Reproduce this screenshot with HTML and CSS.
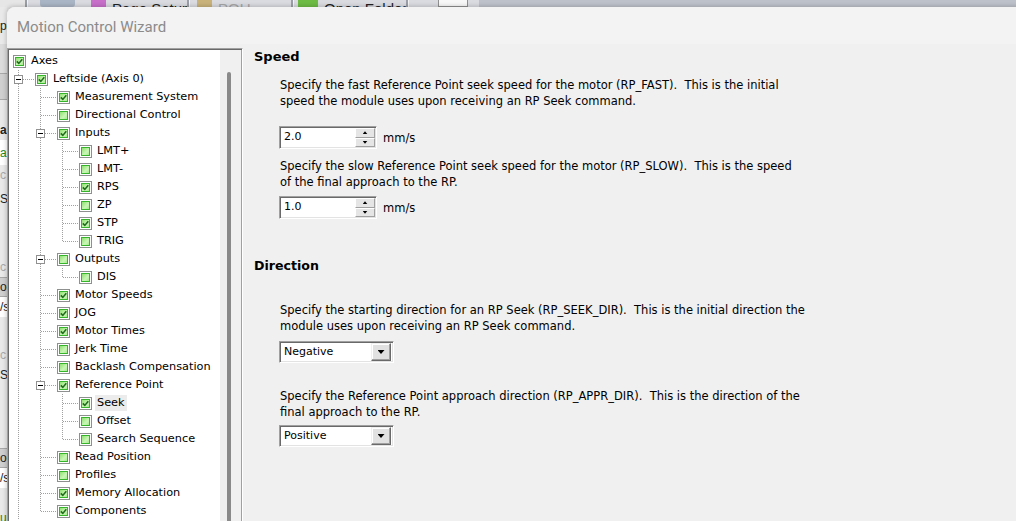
FILE: index.html
```html
<!DOCTYPE html>
<html>
<head>
<meta charset="utf-8">
<title>Motion Control Wizard</title>
<link rel="stylesheet" href="styles.css">
</head>
<body>
<div class="desktop">
  <div class="app-toolbar">
    <div class="tb-seg tb-lead"></div>
    <div class="tb-sep"></div>
    <div class="tb-seg tb-b1"><span class="ic ic-gray"></span></div>
    <div class="tb-seg tb-b2"><span class="ic ic-pink"></span><span class="tb-text">Page Setup</span></div>
    <div class="tb-sep"></div>
    <div class="tb-seg tb-b3"><span class="ic ic-yel"></span><span class="tb-text dis">POU</span></div>
    <div class="tb-sep"></div>
    <div class="tb-seg tb-b4"><span class="ic ic-grn"></span><span class="tb-text">Open Folder</span></div>
    <div class="tb-sep"></div>
    <div class="tb-seg tb-b5"><span class="ic ic-white"></span></div>
    <div class="tb-seg tb-rest"></div>
  </div>
  <div class="app-left">
    <div class="al h37">pa</div>
    <div class="al h29 bg-d"></div>
    <div class="al h27 bg-btn"></div>
    <div class="al h20"></div>
    <div class="al h20 bold">a</div>
    <div class="al h25 bg-w grn">a.</div>
    <div class="al h20 lite">c</div>
    <div class="al h27">Sl</div>
    <div class="al h45"></div>
    <div class="al h20 lite">c</div>
    <div class="al h20 bg-btn">oo</div>
    <div class="al h20 bg-w">/s</div>
    <div class="al h28"></div>
    <div class="al h20 lite">c</div>
    <div class="al h20">Sl</div>
    <div class="al h63"></div>
    <div class="al h20 bg-btn">oo</div>
    <div class="al h20 bg-w">/s</div>
    <div class="al h20"></div>
    <div class="al h20 grn">ur</div>
  </div>

  <div class="dialog">
    <div class="titlebar">Motion Control Wizard</div>
    <div class="dlg-body">
      <div class="tree-box">
        <div class="tree-view">
          <ul class="tree">
            <li>
              <div class="row l0"><span class="cb on"></span><span class="lbl">Axes</span></div>
              <ul class="kids k0">
                <li>
                  <div class="row l1"><span class="exp"></span><span class="conn"></span><span class="cb on"></span><span class="lbl">Leftside (Axis 0)</span></div>
                  <ul class="kids k1">
                    <li><div class="row l2"><span class="conn"></span><span class="cb on"></span><span class="lbl">Measurement System</span></div></li>
                    <li><div class="row l2"><span class="conn"></span><span class="cb"></span><span class="lbl">Directional Control</span></div></li>
                    <li>
                      <div class="row l2"><span class="exp"></span><span class="conn"></span><span class="cb on"></span><span class="lbl">Inputs</span></div>
                      <ul class="kids k2">
                        <li><div class="row l3"><span class="conn"></span><span class="cb"></span><span class="lbl">LMT+</span></div></li>
                        <li><div class="row l3"><span class="conn"></span><span class="cb"></span><span class="lbl">LMT-</span></div></li>
                        <li><div class="row l3"><span class="conn"></span><span class="cb on"></span><span class="lbl">RPS</span></div></li>
                        <li><div class="row l3"><span class="conn"></span><span class="cb"></span><span class="lbl">ZP</span></div></li>
                        <li><div class="row l3"><span class="conn"></span><span class="cb on"></span><span class="lbl">STP</span></div></li>
                        <li><div class="row l3"><span class="conn"></span><span class="cb"></span><span class="lbl">TRIG</span></div></li>
                      </ul>
                    </li>
                    <li>
                      <div class="row l2"><span class="exp"></span><span class="conn"></span><span class="cb"></span><span class="lbl">Outputs</span></div>
                      <ul class="kids k2">
                        <li><div class="row l3"><span class="conn"></span><span class="cb"></span><span class="lbl">DIS</span></div></li>
                      </ul>
                    </li>
                    <li><div class="row l2"><span class="conn"></span><span class="cb on"></span><span class="lbl">Motor Speeds</span></div></li>
                    <li><div class="row l2"><span class="conn"></span><span class="cb on"></span><span class="lbl">JOG</span></div></li>
                    <li><div class="row l2"><span class="conn"></span><span class="cb on"></span><span class="lbl">Motor Times</span></div></li>
                    <li><div class="row l2"><span class="conn"></span><span class="cb"></span><span class="lbl">Jerk Time</span></div></li>
                    <li><div class="row l2"><span class="conn"></span><span class="cb"></span><span class="lbl">Backlash Compensation</span></div></li>
                    <li>
                      <div class="row l2"><span class="exp"></span><span class="conn"></span><span class="cb on"></span><span class="lbl">Reference Point</span></div>
                      <ul class="kids k2">
                        <li><div class="row l3"><span class="conn"></span><span class="cb on"></span><span class="lbl sel">Seek</span></div></li>
                        <li><div class="row l3"><span class="conn"></span><span class="cb"></span><span class="lbl">Offset</span></div></li>
                        <li><div class="row l3"><span class="conn"></span><span class="cb"></span><span class="lbl">Search Sequence</span></div></li>
                      </ul>
                    </li>
                    <li><div class="row l2"><span class="conn"></span><span class="cb"></span><span class="lbl">Read Position</span></div></li>
                    <li><div class="row l2"><span class="conn"></span><span class="cb"></span><span class="lbl">Profiles</span></div></li>
                    <li><div class="row l2"><span class="conn"></span><span class="cb on"></span><span class="lbl">Memory Allocation</span></div></li>
                    <li><div class="row l2"><span class="conn"></span><span class="cb on"></span><span class="lbl">Components</span></div></li>
                  </ul>
                </li>
              </ul>
            </li>
          </ul>
        </div>
        <div class="vscroll"><div class="thumb"></div></div>
      </div>

      <div class="page">
        <h2 class="sec">Speed</h2>
        <p class="desc m-p1">Specify the fast Reference Point seek speed for the motor (RP_FAST).&nbsp; This is the initial<br>speed the module uses upon receiving an RP Seek command.</p>
        <div class="field m-s1">
          <div class="spin"><span class="val">2.0</span><span class="spin-btns"><span class="sb up"></span><span class="sb dn"></span></span></div>
          <span class="unit">mm/s</span>
        </div>
        <p class="desc m-p2">Specify the slow Reference Point seek speed for the motor (RP_SLOW).&nbsp; This is the speed<br>of the final approach to the RP.</p>
        <div class="field m-s2">
          <div class="spin"><span class="val">1.0</span><span class="spin-btns"><span class="sb up"></span><span class="sb dn"></span></span></div>
          <span class="unit">mm/s</span>
        </div>

        <h2 class="sec m-h2">Direction</h2>
        <p class="desc m-p3">Specify the starting direction for an RP Seek (RP_SEEK_DIR).&nbsp; This is the initial direction the<br>module uses upon receiving an RP Seek command.</p>
        <div class="field m-c1">
          <div class="combo"><span class="val">Negative</span><span class="combo-btn"><span class="tri"></span></span></div>
        </div>
        <p class="desc m-p4">Specify the Reference Point approach direction (RP_APPR_DIR).&nbsp; This is the direction of the<br>final approach to the RP.</p>
        <div class="field m-c2">
          <div class="combo"><span class="val">Positive</span><span class="combo-btn"><span class="tri"></span></span></div>
        </div>
      </div>
    </div>
  </div>
</div>
</body>
</html>
```

FILE: styles.css
```css
* { box-sizing: border-box; }
html, body { margin: 0; padding: 0; }
body { width: 1016px; height: 521px; overflow: hidden; font-family: "DejaVu Sans", sans-serif; }

.desktop { position: relative; width: 1016px; height: 521px; overflow: hidden; background: #e4e4e4; }

/* parent application (behind the dialog) */
.app-toolbar { height: 7px; overflow: hidden; display: flex; background: #bec2ca; font-family: "Liberation Sans", sans-serif; font-size: 15px; white-space: nowrap; }
.tb-seg { display: flex; align-items: flex-start; background: #d9dbe0; flex: none; }
.tb-lead { width: 25px; background: #e6e6e6; }
.tb-sep { width: 3px; flex: none; background: #9a9ea6; border-right: 1px solid #f4f4f4; }
.tb-b1 { width: 57px; padding-left: 12px; }
.tb-b2 { width: 102px; padding-left: 2px; }
.tb-b3 { width: 101px; padding-left: 7px; }
.tb-b4 { width: 112px; padding-left: 4px; }
.tb-b5 { width: 70px; padding-left: 29px; }
.tb-rest { flex: 1; background: #bdc1c9; }
.tb-text { margin-left: 6px; color: #222; line-height: 7px; padding-top: 5px; white-space: nowrap; }
.tb-text.dis { color: #a6a6a6; }
.ic { width: 15px; height: 7px; flex: none; }
.ic-gray { width: 35px; background: #a9b4c4; border-radius: 0 0 3px 3px; }
.ic-pink { background: #c76fc9; margin-left: 4px; }
.ic-yel { background: #c9b27a; }
.ic-grn { width: 20px; background: #6dbb45; }
.ic-white { width: 30px; background: #f7f7f7; border: 1px solid #8f8f8f; border-top: 0; }

.app-left { width: 7px; height: 514px; overflow: hidden; display: flex; flex-direction: column; background: #e9e9e9;
  font-family: "Liberation Sans", sans-serif; font-size: 12px; color: #222; white-space: nowrap; }
.al { width: 7px; flex: none; overflow: hidden; display: flex; align-items: center; }
.h20 { height: 20px; } .h25 { height: 25px; } .h27 { height: 27px; } .h28 { height: 28px; }
.h29 { height: 29px; } .h37 { height: 37px; } .h45 { height: 45px; } .h63 { height: 63px; }
.bg-d { background: #dcdcdc; }
.bg-btn { background: #cfcfcf; border-top: 1px solid #a8a8a8; border-bottom: 1px solid #a8a8a8; }
.bg-w { background: #fff; }
.bold { font-weight: bold; }
.grn { color: #1d8a1d; }
.lite { color: #a8a8a8; }

/* dialog window */
.dialog { position: absolute; left: 7px; top: 7px; width: 1020px; height: 530px; background: #f0f0f0; border-top-left-radius: 8px; box-shadow: -1px -1px 4px rgba(0,0,0,0.18); overflow: hidden; }
.titlebar { height: 37px; background: #f3f3f3; padding: 3px 0 0 10px; display: flex; align-items: center; font-family: Roboto, sans-serif; font-size: 15px; color: #8b8b8b; }
.dlg-body { display: flex; align-items: flex-start; padding-top: 4px; }

/* tree view */
.tree-box { width: 236px; height: 490px; display: flex; background: #fff; border: 1px solid; border-color: #a0a0a0 #fff #fff #a0a0a0; box-shadow: inset 1px 1px 0 #696969, inset -1px 0 0 #a0a0a0; padding: 1px 1px 0 1px; }
.tree-view { width: 211px; overflow: hidden; }
.vscroll { width: 21px; background: #f0f0f0; padding-left: 7px; padding-top: 22px; }
.thumb { width: 4px; height: 460px; background: #8a8a8a; border-radius: 2px 2px 0 0; }

.tree, .tree ul { list-style: none; margin: 0; padding: 0; }
.tree { padding-top: 2px; }
.row { display: flex; align-items: center; height: 18px; white-space: nowrap; font-size: 11.3px; color: #000; }
.l0 { padding-left: 4px; }
.l1 { padding-left: 5px; }
.l2 { padding-left: 27px; }
.l3 { padding-left: 49px; }
.conn { width: 15px; height: 1px; margin-left: 5px; margin-right: 1px; flex: none;
  background: repeating-linear-gradient(to right, #a0a0a0 0 1px, transparent 1px 2px); }
.exp { width: 9px; height: 9px; flex: none; border: 1px solid #919191; background: #fff; display: flex; align-items: center; justify-content: center; }
.exp::after { content: ""; width: 5px; height: 1px; background: #000; }
.exp + .conn { width: 11px; margin-left: 0; }

.kids { margin-top: -3px; padding-top: 3px;
  background-image: repeating-linear-gradient(to bottom, #a0a0a0 0 1px, transparent 1px 2px);
  background-repeat: no-repeat; background-size: 1px calc(100% - 9px); }
.k0 { background-position: 9px 0; background-size: 1px 100%; }
.k1 { background-position: 31px 0; }
.k2 { background-position: 53px 0; }

.cb { width: 13px; height: 13px; flex: none; border: 1px solid #8e8f8f; background: #fff; padding: 1px; display: flex; }
.cb::before { content: ""; flex: 1; border: 1px solid #35b52a; background: linear-gradient(135deg, #8fe070 0%, #c9f6b6 60%, #a8ea8f 100%); }
.cb.on::before { background:
  url("data:image/svg+xml,%3Csvg xmlns='http://www.w3.org/2000/svg' width='7' height='7'%3E%3Cpath d='M0.8 3.4 L2.8 5.4 L6.3 1.2' fill='none' stroke='%23206b1c' stroke-width='1.6'/%3E%3C/svg%3E") center / 7px 7px no-repeat,
  linear-gradient(135deg, #8fe070 0%, #c9f6b6 60%, #a8ea8f 100%); }
.lbl { margin-left: 3px; padding: 0 2px; line-height: 16px; }
.lbl.sel { background: #ececec; }

/* page on the right */
.page { flex: 1; padding: 1px 0 0 11px; font-size: 11.5px; color: #000; }
.sec { margin: 0; font: bold 13px/16px "DejaVu Sans", sans-serif; }
.sec.m-h2 { font-size: 12.6px; }
.desc { margin: 0 0 0 26px; line-height: 16px; white-space: nowrap; }
.field { display: flex; align-items: center; margin-left: 25px; }
.m-p1 { margin-top: 12px; }
.m-s1 { margin-top: 17px; }
.m-p2 { margin-top: 9px; }
.m-s2 { margin-top: 6px; }
.m-h2 { margin-top: 39px; }
.m-p3 { margin-top: 28px; }
.m-c1 { margin-top: 7px; }
.m-p4 { margin-top: 25px; }
.m-c2 { margin-top: 5px; }

.spin, .combo { display: flex; background: #fff; border: 1px solid; border-color: #a0a0a0 #fff #fff #a0a0a0; box-shadow: inset 1px 1px 0 #696969, inset -1px -1px 0 #e3e3e3; padding: 1px; }
.spin { width: 98px; height: 23px; }
.combo { width: 115px; height: 22px; }
.val { flex: 1; padding-left: 3px; line-height: 18px; font-size: 11px; }
.spin-btns { width: 20px; display: flex; flex-direction: column; }
.sb { flex: 1; background: #e5e5e5; border: 1px solid; border-color: #fff #a0a0a0 #a0a0a0 #fff; display: flex; align-items: center; justify-content: center; }
.sb::after { content: ""; width: 5px; height: 3px; background: #000; }
.sb.up::after { clip-path: polygon(50% 0, 100% 100%, 0 100%); }
.sb.dn::after { clip-path: polygon(0 0, 100% 0, 50% 100%); }
.unit { margin-left: 6px; }
.combo-btn { width: 20px; margin-right: 1px; background: #e1e1e1; border: 1px solid; border-color: #f0f0f0 #696969 #696969 #f0f0f0; box-shadow: inset -1px -1px 0 #a0a0a0, inset 1px 1px 0 #fff; display: flex; align-items: center; justify-content: center; }
.tri { width: 7px; height: 4px; background: #000; clip-path: polygon(0 0, 100% 0, 50% 100%); }
```
